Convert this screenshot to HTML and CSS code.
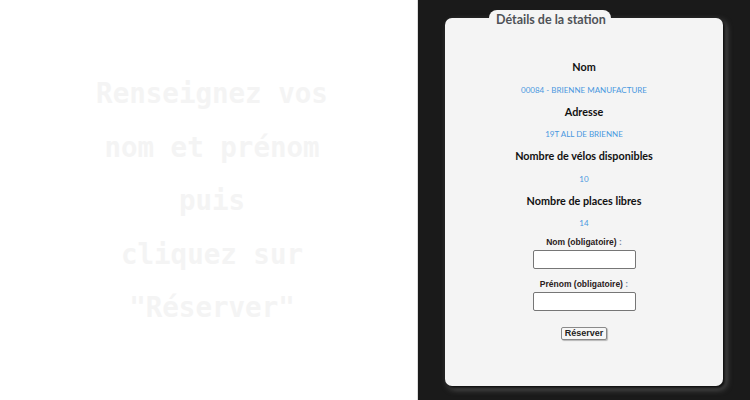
FILE: index.html
```html
<!DOCTYPE html>
<html lang="fr">
<head>
<meta charset="utf-8">
<title>Réservation</title>
<link rel="stylesheet" href="styles.css">
</head>
<body>
<div class="page">
  <section class="map-side">
    <p class="hint">Renseignez vos<br>nom et prénom<br>puis<br>cliquez sur<br>"Réserver"</p>
  </section>
  <section class="panel-side">
    <div class="card">
      <div class="tab">Détails de la station</div>
      <div class="info">
        <div class="label">Nom</div>
        <div class="value">00084 - BRIENNE MANUFACTURE</div>
        <div class="label">Adresse</div>
        <div class="value">19T ALL DE BRIENNE</div>
        <div class="label">Nombre de vélos disponibles</div>
        <div class="value">10</div>
        <div class="label">Nombre de places libres</div>
        <div class="value">14</div>
      </div>
      <form class="form">
        <label class="field-label" for="nom">Nom (obligatoire) <span class="colon">:</span></label>
        <input class="field" id="nom" type="text">
        <label class="field-label second" for="prenom">Prénom (obligatoire) <span class="colon">:</span></label>
        <input class="field" id="prenom" type="text">
        <button class="btn" type="button">Réserver</button>
      </form>
    </div>
  </section>
</div>
</body>
</html>
```
FILE: styles.css
```css
html, body {
  margin: 0;
  padding: 0;
  background: #ffffff;
}
.page {
  display: flex;
  width: 750px;
  height: 400px;
  overflow: hidden;
}
.map-side {
  width: 418px;
  flex: none;
  border-right: 1px solid #dcdcdc;
  background: #ffffff;
  display: flex;
  justify-content: center;
  padding-left: 7px;
  box-sizing: border-box;
}
.hint {
  margin: 67px 0 0;
  font-family: "DejaVu Sans Mono", monospace;
  font-weight: bold;
  font-size: 27.5px;
  line-height: 53.5px;
  color: #f4f4f4;
  text-align: center;
}
.panel-side {
  flex: 1;
  background: #1a1a1a;
  padding: 18px 27px 14px;
}
.card {
  position: relative;
  height: 368px;
  background: #f4f4f4;
  border-radius: 7px;
  box-shadow: 2px 2px 3px rgba(0,0,0,0.9), 3px 3px 6px rgba(140,140,140,0.7);
  padding-top: 38px;
  box-sizing: border-box;
  text-align: center;
  font-family: "Lato", "Liberation Sans", sans-serif;
}
.tab {
  position: absolute;
  left: 44px;
  top: -8px;
  width: 122px;
  height: 18px;
  box-sizing: border-box;
  padding-left: 7px;
  background: #f4f4f4;
  border-radius: 8px 8px 0 0;
  text-align: left;
  white-space: nowrap;
  font-weight: bold;
  font-size: 12.5px;
  line-height: 19px;
  color: #4f5257;
}
.label {
  font-weight: bold;
  font-size: 10.8px;
  line-height: 22.5px;
  color: #111;
}
.value {
  font-size: 8px;
  line-height: 22.1px;
  color: #4a98e0;
}
.form {
  display: flex;
  flex-direction: column;
  align-items: center;
  padding-top: 3px;
}
.field-label {
  font-family: "Liberation Sans", Arial, sans-serif;
  font-weight: bold;
  font-size: 8.5px;
  line-height: 11px;
  color: #2a2020;
  margin-bottom: 2px;
}
.field-label.second {
  margin-top: 10px;
}
.colon {
  color: #7a8aa0;
}
.field {
  width: 103px;
  height: 19px;
  box-sizing: border-box;
  border: 1px solid #767676;
  border-radius: 2px;
  background: #fff;
  padding: 0;
  margin: 0;
}
.btn {
  margin-top: 16px;
  height: 13px;
  padding: 0 3px;
  box-sizing: border-box;
  border: 1px solid #8a8a8a;
  border-radius: 2px;
  background: #f6f6f6;
  box-shadow: 1px 1px 1px rgba(0,0,0,0.25);
  font-family: "Liberation Sans", Arial, sans-serif;
  font-weight: bold;
  font-size: 9px;
  line-height: 11px;
  color: #222;
}
```
